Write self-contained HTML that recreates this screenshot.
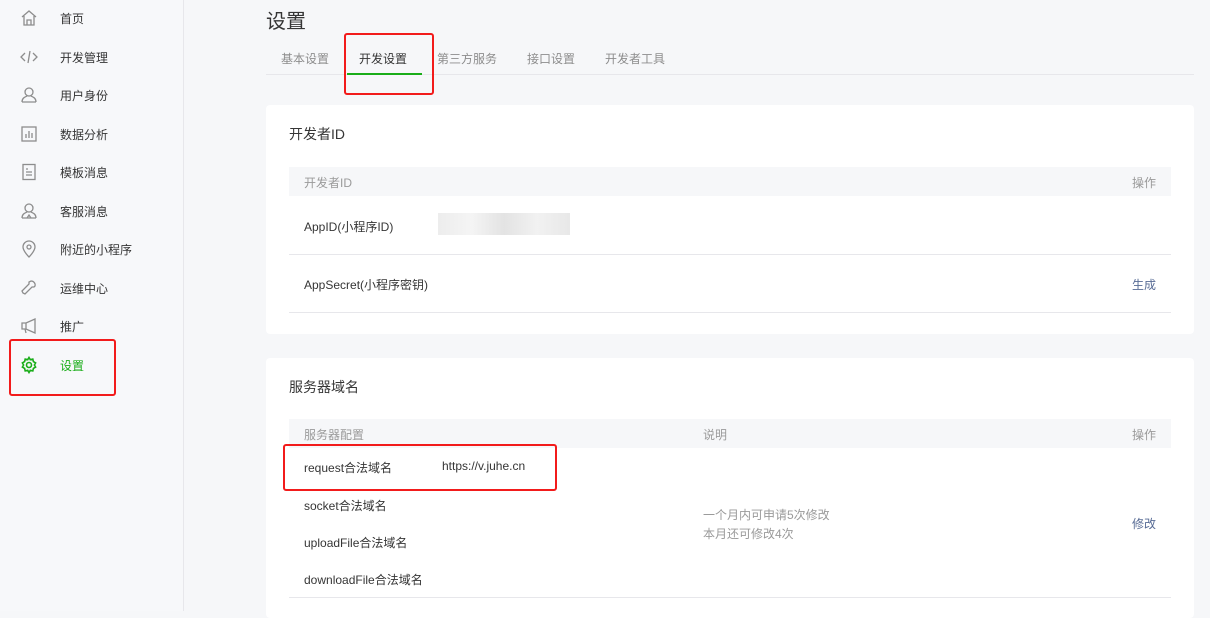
<!DOCTYPE html>
<html><head><meta charset="utf-8"><style>
*{margin:0;padding:0;box-sizing:border-box}
body{width:1210px;height:611px;overflow:hidden;background:#f6f7f9;font-family:"Liberation Sans","Noto Sans CJK SC",sans-serif;font-size:12px;color:#353535;position:relative}
.side{position:absolute;left:0;top:0;width:184px;height:611px;background:#f7f8fa;border-right:1px solid #e7e7eb}
.item{position:absolute;left:0;height:20px;width:180px}
.item svg{position:absolute;left:20px;top:1px}
.item span{position:absolute;left:60px;top:2px;font-size:12px;color:#353535}
.abs{position:absolute}
.card{position:absolute;left:266px;width:928px;background:#fff;border-radius:4px}
.th{position:absolute;left:289px;width:882px;height:29px;background:#f6f7f9;color:#9a9a9a}
.red{position:absolute;border:2px solid #f21b1b;border-radius:3px}
.line{position:absolute;left:289px;width:882px;height:1px;background:#e7e7eb}
</style></head><body>
<div class="side">
<div class="item" style="top:8px"><svg width="18" height="18" viewBox="0 0 18 18" fill="none" stroke="#8d8d8d" stroke-width="1.3"><path d="M2 8L9 2l7 6M4 7v9h10V7M7 16v-5h4v5"/></svg><span>首页</span></div>
<div class="item" style="top:47px"><svg width="18" height="18" viewBox="0 0 18 18" fill="none" stroke="#8d8d8d" stroke-width="1.3"><path d="M5 5L1 9l4 4M13 5l4 4-4 4M10 3L8 15"/></svg><span>开发管理</span></div>
<div class="item" style="top:85px"><svg width="18" height="18" viewBox="0 0 18 18" fill="none" stroke="#8d8d8d" stroke-width="1.3"><circle cx="9" cy="6" r="4"/><path d="M2 16c0-4 3-5 5-6M16 16c0-4-3-5-5-6M2 16h14"/></svg><span>用户身份</span></div>
<div class="item" style="top:124px"><svg width="18" height="18" viewBox="0 0 18 18" fill="none" stroke="#8d8d8d" stroke-width="1.3"><rect x="2" y="2" width="14" height="14"/><path d="M6 13V9M9 13V6M12 13V8"/></svg><span>数据分析</span></div>
<div class="item" style="top:162px"><svg width="18" height="18" viewBox="0 0 18 18" fill="none" stroke="#8d8d8d" stroke-width="1.3"><rect x="3" y="1.5" width="12" height="15"/><path d="M6 6h2M6 9h6M6 12h6"/></svg><span>模板消息</span></div>
<div class="item" style="top:201px"><svg width="18" height="18" viewBox="0 0 18 18" fill="none" stroke="#8d8d8d" stroke-width="1.3"><circle cx="9" cy="6" r="4"/><path d="M2 16c0-4 3-5 5-6M16 16c0-4-3-5-5-6M2 16h14M7 16l2-3 2 3"/></svg><span>客服消息</span></div>
<div class="item" style="top:239px"><svg width="18" height="18" viewBox="0 0 18 18" fill="none" stroke="#8d8d8d" stroke-width="1.3"><path d="M9 17s-6-6-6-10a6 6 0 0112 0c0 4-6 10-6 10z"/><circle cx="9" cy="7" r="2"/></svg><span>附近的小程序</span></div>
<div class="item" style="top:278px"><svg width="18" height="18" viewBox="0 0 18 18" fill="none" stroke="#8d8d8d" stroke-width="1.3"><path d="M11 2a4 4 0 014 5l-1 1-2 0-7 7-2-1-1-2 7-7 0-2z"/></svg><span>运维中心</span></div>
<div class="item" style="top:316px"><svg width="18" height="18" viewBox="0 0 18 18" fill="none" stroke="#8d8d8d" stroke-width="1.3"><path d="M2 6h4l9-4v14l-9-4H2zM6 6v6M5 12l1 4"/></svg><span>推广</span></div>
<div class="item" style="top:355px"><svg width="18" height="18" viewBox="0 0 18 18" fill="none" stroke="#1aad19" stroke-width="1.6"><path d="M9 1.5l1.3 2.2 2.5-.6.6 2.5 2.2 1.3-1.2 2.1 1.2 2.1-2.2 1.3-.6 2.5-2.5-.6L9 16.5l-1.3-2.2-2.5.6-.6-2.5-2.2-1.3L3.6 9 2.4 6.9l2.2-1.3.6-2.5 2.5.6z"/><circle cx="9" cy="9" r="2.5"/></svg><span style="color:#1aad19">设置</span></div>
</div>
<div class="red" style="left:9px;top:339px;width:107px;height:57px"></div>

<div class="abs" style="left:266px;top:5px;font-size:20px;color:#353535">设置</div>
<div class="abs" style="left:266px;top:74px;width:928px;height:1px;background:#e7e7eb"></div>
<div class="abs" style="left:281px;top:50px;font-size:12px;color:#8d8d8d">基本设置</div>
<div class="abs" style="left:359px;top:50px;font-size:12px;color:#353535">开发设置</div>
<div class="abs" style="left:347px;top:73px;width:75px;height:2px;background:#1aad19"></div>
<div class="abs" style="left:437px;top:50px;font-size:12px;color:#8d8d8d">第三方服务</div>
<div class="abs" style="left:527px;top:50px;font-size:12px;color:#8d8d8d">接口设置</div>
<div class="abs" style="left:605px;top:50px;font-size:12px;color:#8d8d8d">开发者工具</div>
<div class="red" style="left:344px;top:33px;width:90px;height:62px"></div>

<div class="card" style="top:105px;height:229px"></div>
<div class="abs" style="left:289px;top:124px;font-size:14px">开发者ID</div>
<div class="th" style="top:167px"><span class="abs" style="left:15px;top:7px">开发者ID</span><span class="abs" style="right:15px;top:7px">操作</span></div>
<div class="abs" style="left:304px;top:218px">AppID(小程序ID)</div>
<div class="abs" style="left:438px;top:213px;width:132px;height:22px;background:linear-gradient(90deg,#e8e8e8,#f2f2f2,#dcdcdc,#eee,#e2e2e2);opacity:.8"></div>
<div class="line" style="top:254px"></div>
<div class="abs" style="left:304px;top:276px">AppSecret(小程序密钥)</div>
<div class="abs" style="left:1132px;top:276px;color:#576b95">生成</div>
<div class="line" style="top:312px"></div>

<div class="card" style="top:358px;height:260px"></div>
<div class="abs" style="left:289px;top:377px;font-size:14px">服务器域名</div>
<div class="th" style="top:419px"><span class="abs" style="left:15px;top:7px">服务器配置</span><span class="abs" style="left:414px;top:7px">说明</span><span class="abs" style="right:15px;top:7px">操作</span></div>
<div class="abs" style="left:304px;top:459px">request合法域名</div>
<div class="abs" style="left:442px;top:459px">https://v.juhe.cn</div>
<div class="red" style="left:283px;top:444px;width:274px;height:47px"></div>
<div class="abs" style="left:304px;top:497px">socket合法域名</div>
<div class="abs" style="left:304px;top:534px">uploadFile合法域名</div>
<div class="abs" style="left:304px;top:571px">downloadFile合法域名</div>
<div class="abs" style="left:703px;top:506px;color:#9a9a9a;line-height:19px">一个月内可申请5次修改<br>本月还可修改4次</div>
<div class="abs" style="left:1132px;top:515px;color:#576b95">修改</div>
<div class="line" style="top:597px"></div>
</body></html>
